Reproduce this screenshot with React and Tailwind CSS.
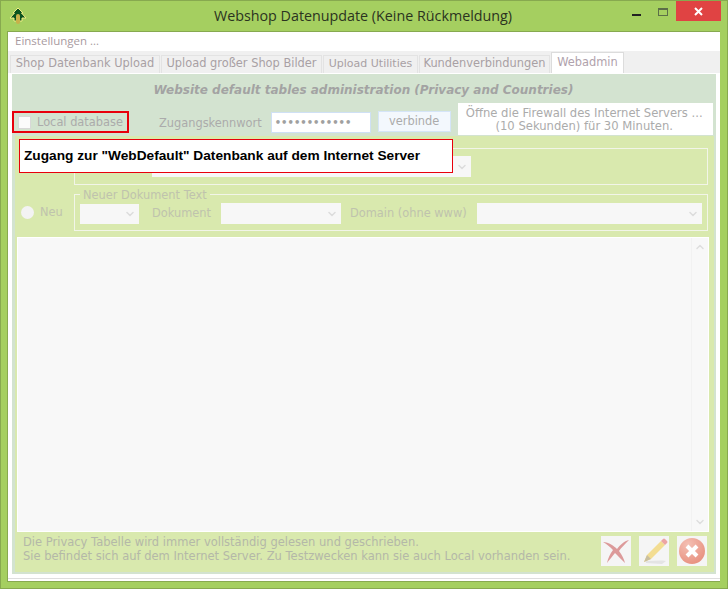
import { ChevronDown, ChevronUp } from 'lucide-react'

const verdana = 'font-["DejaVu_Sans",sans-serif]'

const tabs = [
  { label: 'Shop Datenbank Upload', width: 'w-[150px]' },
  { label: 'Upload großer Shop Bilder', width: 'w-[161px]' },
  { label: 'Upload Utilities', width: 'w-[95px] text-[11px]' },
  { label: 'Kundenverbindungen', width: 'w-[131px]' },
]

function AppIcon() {
  return (
    <svg width="18" height="18" viewBox="0 0 18 18">
      <path d="M9 1 L14 6 L12.5 6 L17 11 L13 11 L13 14 L5 14 L5 11 L1 11 L5.5 6 L4 6 Z" fill="#0c5320" stroke="#f2ee86" strokeWidth="1" strokeLinejoin="round" />
      <rect x="7" y="7" width="4" height="10" rx="2" fill="#c8b04a" />
    </svg>
  )
}

function Select({ className }) {
  return (
    <div className={`flex h-[21px] shrink-0 items-center justify-end bg-[#f7f7f7] pr-[3px] ${className}`}>
      <ChevronDown className="h-3 w-3 text-[#dcdcdc]" strokeWidth={3} />
    </div>
  )
}

function Radio() {
  return <div className="h-[13px] w-[13px] rounded-full bg-[#f3f3f3]" />
}

function ImageButton({ children }) {
  return <div className="flex h-[30px] w-[30px] items-center justify-center bg-[#f5f5f5]">{children}</div>
}

export default function App() {
  return (
    <div className={`relative flex h-[589px] w-[728px] flex-col overflow-hidden border border-[#87a94f] bg-[#a5cf60] ${verdana}`}>
      <div className="relative flex h-[30px] shrink-0 items-center justify-center">
        <div className="absolute left-[8px] top-[6px]"><AppIcon /></div>
        <span className='pr-[2px] font-["Open_Sans",sans-serif] text-[14.3px] text-[#2b3320]'>Webshop Datenupdate (Keine Rückmeldung)</span>
        <div className="absolute right-[86px] top-[13px] h-[2px] w-[9px] bg-[#222]" />
        <div className="absolute right-[59px] top-[7px] h-[8px] w-[10px] border border-[#5c6f48] border-t-2" />
        <div className="absolute right-[6px] top-0 flex h-[20px] w-[45px] items-center justify-center bg-[#e04343] text-white">
          <svg width="9" height="9" viewBox="0 0 9 9"><path d="M1 1 L8 8 M8 1 L1 8" stroke="#fff" strokeWidth="2" /></svg>
        </div>
      </div>

      <div className="ml-[6px] mr-[7px] flex h-[551px] shrink-0 flex-col border-b border-l border-t border-[#87a94f] bg-[#f0f0f0]">
        <div className='flex h-[19px] shrink-0 items-center bg-white pb-[2px] pl-[7px] font-["Open_Sans",sans-serif] text-[11.5px] text-[#a89aa0]'>Einstellungen ...</div>

        <div className="flex h-[22px] shrink-0 items-end pl-[2px] text-[11.4px] text-[#a8a0a4]">
          {tabs.map((tab) => (
            <div key={tab.label} className={`mr-[1px] flex h-[18px] items-center justify-center border border-b-0 border-[#e3e3e3] pb-[1px] ${tab.width}`}>{tab.label}</div>
          ))}
          <div className="mb-[-1px] flex h-[22px] w-[73px] items-center justify-center border border-b-0 border-[#dcdcdc] bg-white pb-[1px] text-[#b0a2ac]">Webadmin</div>
        </div>

        <div className="flex flex-1 flex-col bg-white pl-[4px] pr-[4px] pt-[1px]">
          <div className="flex flex-col bg-[#d3e3d0]">
            <div className="flex h-[29px] items-center justify-center pr-[1px] pt-[2px] text-[12px] font-bold italic text-[#a3a3a3]">
              Website default tables administration (Privacy and Countries)
            </div>

            <div className="flex h-[33px] items-start text-[11.4px] text-[#ababab]">
              <div className="mt-[8px] flex h-[22px] w-[117px] items-center border-2 border-[#e8000b] pl-[4px]">
                <div className="h-[13px] w-[13px] border border-[#d8d8d8] bg-[#fbfbfb]" />
                <span className="ml-[6px] mt-[1px]">Local database</span>
              </div>
              <span className="ml-[30px] mt-[12px]">Zugangskennwort</span>
              <div className="ml-[9px] mt-[9px] flex h-[21px] w-[100px] items-center border border-[#cfe0f5] bg-white pl-[3px] text-[10px] font-bold text-[#a0a0a0]">••••••••••••</div>
              <div className="ml-[7px] mt-[8px] flex h-[21px] w-[73px] items-center justify-center border border-[#d5e5f8] bg-[#f3f8fd] pt-[1px]">verbinde</div>
              <div className="ml-[7px] flex h-[32px] w-[255px] flex-col items-center justify-center bg-white pr-[2px] pt-[2px] text-[11.6px] leading-[13px]">
                <span>Öffne die Firewall des Internet Servers ...</span>
                <span>(10 Sekunden) für 30 Minuten.</span>
              </div>
            </div>

            <div className="mb-[2px] ml-[3px] mr-[2px] flex h-[436px] flex-col bg-[#d9e9ae] text-[11.4px] text-[#bfc3ad]">
              <div className="mt-[12px] flex h-[37px] shrink-0 items-center">
                <div className="ml-[6px] w-[53px]"><Radio /></div>
                <div className="flex h-[37px] w-[634px] items-center border border-[#f2f5e8] pl-[77px]">
                  <Select className="w-[319px]" />
                </div>
              </div>

              <div className="mt-[9px] flex h-[37px] shrink-0 items-center">
                <div className="ml-[6px] flex w-[53px] items-center gap-[6px]"><Radio /><span className="mt-[1px]">Neu</span></div>
                <div className="relative flex h-[37px] w-[634px] items-center border border-[#f2f5e8] pl-[5px] pt-[2px]">
                  <span className="absolute left-[5px] top-[-8px] bg-[#d9e9ae] px-[3px]">Neuer Dokument Text</span>
                  <Select className="w-[59px]" />
                  <span className="ml-[13px]">Dokument</span>
                  <Select className="ml-[10px] w-[120px]" />
                  <span className="ml-[9px]">Domain (ohne www)</span>
                  <Select className="ml-[10px] w-[225px]" />
                </div>
              </div>

              <div className="ml-[2px] mt-[6px] flex h-[295px] w-[692px] shrink-0 justify-end border border-white bg-[#f8f8f8]">
                <div className="flex w-[17px] flex-col items-center justify-between border-l border-[#f2f2f2] py-[3px]">
                  <ChevronUp className="h-3 w-3 text-[#dedede]" strokeWidth={3} />
                  <ChevronDown className="h-3 w-3 text-[#dedede]" strokeWidth={3} />
                </div>
              </div>

              <div className="flex flex-1 items-center justify-between pb-[3px] pl-[8px] pr-[7px] text-[#b4b8a8]">
                <div className="mb-[4px] text-[11.5px] leading-[14px]">
                  <div>Die Privacy Tabelle wird immer vollständig gelesen und geschrieben.</div>
                  <div>Sie befindet sich auf dem Internet Server. Zu Testzwecken kann sie auch Local vorhanden sein.</div>
                </div>
                <div className="flex gap-[8px]">
                  <ImageButton>
                    <svg width="28" height="28" viewBox="0 0 28 28" className="blur-[0.4px]">
                      <path d="M1 5 C7 5 12 9 15 12 C18 8 22 4 27 3 C23 7 19 11 17 14 C20 18 22 22 23 26 C19 22 16 19 13 16 C10 20 7 23 5 26 C6 21 8 17 11 13 C8 10 5 7 1 5 Z" fill="#dc9a9a" />
                    </svg>
                  </ImageButton>
                  <ImageButton>
                    <svg width="28" height="28" viewBox="0 0 28 28" className="blur-[0.3px]">
                      <path d="M6 24 C13 24 20 23 26 24 L22 27 L6 26 Z" fill="#e4e4e4" />
                      <path d="M7 18 L21 4 L25 8 L11 22 L4 25 Z" fill="#f3dd92" />
                      <path d="M21 4 L23 2 Q24 1 25 2 L27 4 Q28 5 27 6 L25 8 Z" fill="#eca4a4" />
                      <path d="M7 18 L11 22 L4 25 Z" fill="#c9bfa0" />
                    </svg>
                  </ImageButton>
                  <ImageButton>
                    <svg width="28" height="28" viewBox="0 0 28 28" className="blur-[0.3px]">
                      <defs>
                        <radialGradient id="closeFill" cx="0.35" cy="0.25" r="0.9">
                          <stop offset="0" stopColor="#f4c0b4" />
                          <stop offset="1" stopColor="#e68a78" />
                        </radialGradient>
                      </defs>
                      <circle cx="14" cy="14" r="13" fill="url(#closeFill)" />
                      <path d="M9 9 L19 19 M19 9 L9 19" stroke="#fff" strokeWidth="4" />
                    </svg>
                  </ImageButton>
                </div>
              </div>
            </div>
          </div>
          <div className="flex-1" />
        </div>
        <div className="h-[1px] shrink-0 bg-[#dedede]" />
        <div className="h-[2px] shrink-0 bg-white" />
      </div>

      <div className="absolute left-[18px] top-[138px] flex h-[34px] w-[434px] items-center border border-[#e8000b] bg-white pl-[4px] font-['Liberation_Sans',sans-serif] text-[13.7px] font-bold text-black">
        Zugang zur "WebDefault" Datenbank auf dem Internet Server
      </div>
    </div>
  )
}
